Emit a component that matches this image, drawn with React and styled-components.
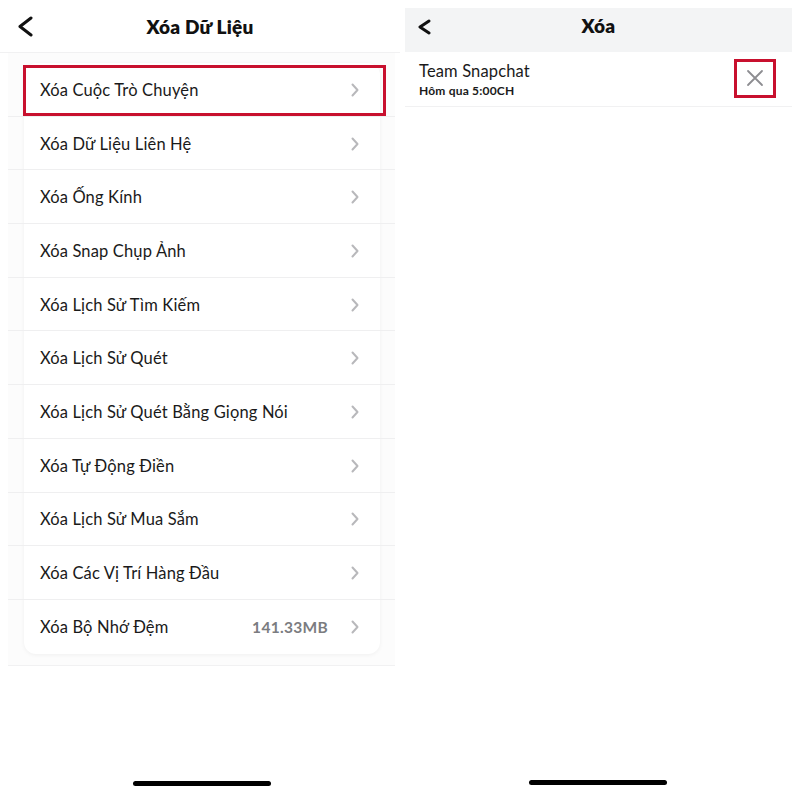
import React from "react";
import styled, { createGlobalStyle } from "styled-components";

const Global = createGlobalStyle`
  html, body { margin: 0; padding: 0; background: #ffffff; }
  body { font-family: "Lato", "Open Sans", "Liberation Sans", sans-serif; color: #111; }
  * { box-sizing: border-box; }
`;

const Screen = styled.div`
  width: 800px;
  height: 800px;
  display: flex;
  background: #fff;
  overflow: hidden;
`;

const Panel = styled.div`
  width: 400px;
  height: 800px;
  display: flex;
  flex-direction: column;
  padding: ${(p) => p.$pad};
`;

const Header = styled.div`
  height: ${(p) => p.$h}px;
  display: flex;
  align-items: center;
  position: relative;
  justify-content: center;
  padding-bottom: ${(p) => p.$pb || 0}px;
  background: ${(p) => p.$bg || "transparent"};
  border-bottom: ${(p) => (p.$line ? "1px solid #f1f1f2" : "none")};
  flex-shrink: 0;
`;

const BackBtn = styled.div`
  position: absolute;
  left: ${(p) => p.$left}px;
  top: ${(p) => p.$top}px;
  display: flex;
`;

const Title = styled.div`
  font-size: 19px;
  font-weight: 800;
  color: #111;
  letter-spacing: 0.2px;
`;

const ListArea = styled.div`
  margin: 0 5px 0 8px;
  background: #fcfcfc;
  padding: 10px 15px 11px 16px;
  border-bottom: 1px solid #f1f1f2;
`;

const Card = styled.div`
  background: #fff;
  border-radius: 12px;
  box-shadow: 0 1px 4px rgba(0, 0, 0, 0.05);
  display: flex;
  flex-direction: column;
`;

const Row = styled.div`
  height: 53.7px;
  display: flex;
  align-items: center;
  padding: 0 20px 0 16px;
  position: relative;
  &:not(:last-child)::after {
    content: "";
    position: absolute;
    left: -16px;
    right: -15px;
    bottom: 0;
    height: 1px;
    background: #efeff0;
  }
`;

const RowLabel = styled.div`
  flex: 1;
  font-size: 16.5px;
  color: #1a1a1a;
  letter-spacing: 0.15px;
`;

const RowValue = styled.div`
  font-size: 15.5px;
  font-weight: 700;
  color: #7b7c80;
  letter-spacing: 0.3px;
  margin-right: 22px;
`;

const Highlight = styled.div`
  position: absolute;
  left: -1px;
  right: -6px;
  top: 2px;
  bottom: 1px;
  border: 3px solid #c8102e;
  pointer-events: none;
`;

const Spacer = styled.div`
  flex: 1;
`;

const HomeBar = styled.div`
  width: 138px;
  height: 5px;
  border-radius: 3px;
  background: #000;
  align-self: center;
  margin-bottom: ${(p) => p.$mb}px;
  margin-left: ${(p) => p.$ml}px;
`;

const ChatRow = styled.div`
  height: 55px;
  display: flex;
  align-items: center;
  padding: 0 16px 0 14px;
  border-bottom: 1px solid #f1f1f2;
`;

const ChatText = styled.div`
  flex: 1;
  display: flex;
  flex-direction: column;
  gap: 2px;
`;

const ChatName = styled.div`
  font-size: 16.5px;
  color: #1a1a1a;
  letter-spacing: 0.15px;
`;

const ChatTime = styled.div`
  font-size: 12px;
  font-weight: 700;
  color: #1a1a1a;
  letter-spacing: 0.2px;
`;

const CloseBox = styled.div`
  width: 42px;
  height: 39px;
  border: 3px solid #c8102e;
  display: flex;
  align-items: center;
  justify-content: center;
  margin-top: -2px;
`;

const Chevron = () => (
  <svg width="10" height="14" viewBox="0 0 10 14">
    <path d="M2.5 1.5 L7.5 7 L2.5 12.5" fill="none" stroke="#b8b8bb" strokeWidth="2" strokeLinecap="round" strokeLinejoin="round" />
  </svg>
);

const BackIcon = ({ w, h, sw }) => (
  <svg width={w} height={h} viewBox={`0 0 ${w} ${h}`}>
    <path
      d={`M${w - sw / 2 - 0.5} ${sw / 2 + 0.5} L${sw / 2 + 0.5} ${h / 2} L${w - sw / 2 - 0.5} ${h - sw / 2 - 0.5}`}
      fill="none"
      stroke="#111"
      strokeWidth={sw}
      strokeLinecap="round"
      strokeLinejoin="round"
    />
  </svg>
);

const XIcon = () => (
  <svg width="18" height="18" viewBox="0 0 18 18">
    <path d="M2 2 L16 16 M16 2 L2 16" fill="none" stroke="#8d8d91" strokeWidth="1.8" strokeLinecap="round" />
  </svg>
);

const items = [
  { label: "Xóa Cuộc Trò Chuyện", highlight: true },
  { label: "Xóa Dữ Liệu Liên Hệ" },
  { label: "Xóa Ống Kính" },
  { label: "Xóa Snap Chụp Ảnh" },
  { label: "Xóa Lịch Sử Tìm Kiếm" },
  { label: "Xóa Lịch Sử Quét" },
  { label: "Xóa Lịch Sử Quét Bằng Giọng Nói" },
  { label: "Xóa Tự Động Điền" },
  { label: "Xóa Lịch Sử Mua Sắm" },
  { label: "Xóa Các Vị Trí Hàng Đầu" },
  { label: "Xóa Bộ Nhớ Đệm", value: "141.33MB" },
];

export default function App() {
  return (
    <>
      <Global />
      <Screen>
        <Panel $pad="0">
          <Header $h={53} $line>
            <BackBtn $left={18} $top={16}>
              <BackIcon w={15} h={21} sw={3} />
            </BackBtn>
            <Title>Xóa Dữ Liệu</Title>
          </Header>
          <ListArea>
            <Card>
              {items.map((it) => (
                <Row key={it.label}>
                  <RowLabel>{it.label}</RowLabel>
                  {it.value && <RowValue>{it.value}</RowValue>}
                  <Chevron />
                  {it.highlight && <Highlight />}
                </Row>
              ))}
            </Card>
          </ListArea>
          <Spacer />
          <HomeBar $mb={14} $ml={4} />
        </Panel>
        <Panel $pad="8px 8px 0 5px">
          <Header $h={44} $pb={9} $bg="#f3f4f5">
            <BackBtn $left={13} $top={11}>
              <BackIcon w={13} h={16} sw={3} />
            </BackBtn>
            <Title>Xóa</Title>
          </Header>
          <ChatRow>
            <ChatText>
              <ChatName>Team Snapchat</ChatName>
              <ChatTime>Hôm qua 5:00CH</ChatTime>
            </ChatText>
            <CloseBox>
              <XIcon />
            </CloseBox>
          </ChatRow>
          <Spacer />
          <HomeBar $mb={15} $ml={-2} />
        </Panel>
      </Screen>
    </>
  );
}
